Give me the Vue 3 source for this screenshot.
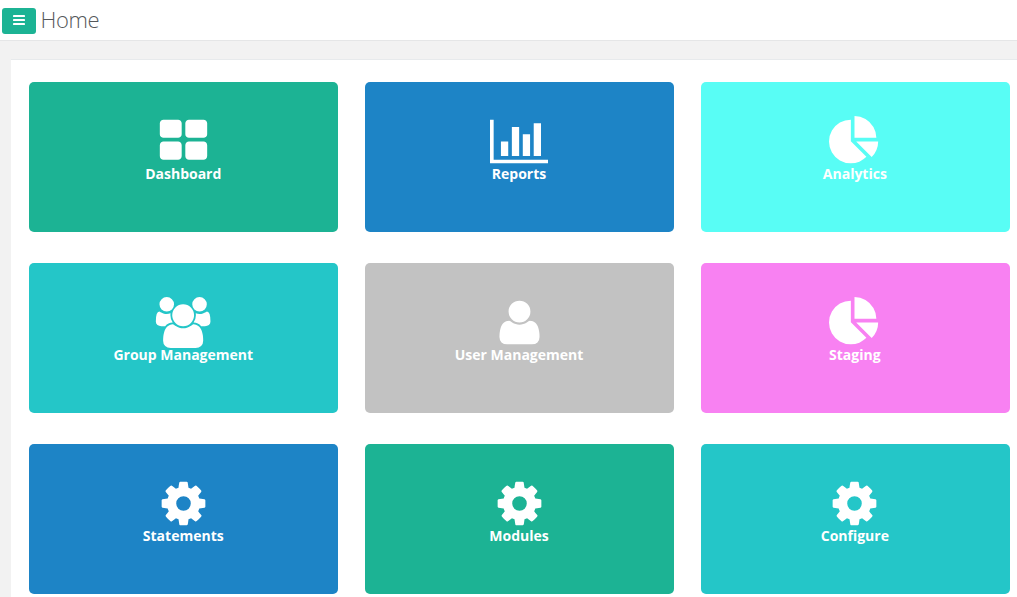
<script setup>
const icons = {
  grid: {
    box: '0 0 1792 1792',
    wide: false,
    d: 'M832 1024v384q0 52-38 90t-90 38h-512q-52 0-90-38t-38-90v-384q0-52 38-90t90-38h512q52 0 90 38t38 90zm0-768v384q0 52-38 90t-90 38h-512q-52 0-90-38t-38-90v-384q0-52 38-90t90-38h512q52 0 90 38t38 90zm896 768v384q0 52-38 90t-90 38h-512q-52 0-90-38t-38-90v-384q0-52 38-90t90-38h512q52 0 90 38t38 90zm0-768v384q0 52-38 90t-90 38h-512q-52 0-90-38t-38-90v-384q0-52 38-90t90-38h512q52 0 90 38t38 90z',
  },
  chart: {
    box: '0 0 2048 1792',
    wide: true,
    d: 'M640 896v512h-256v-512h256zm384-512v1024h-256v-1024h256zm1024 1152v128h-2048v-1536h128v1408h1920zm-640-896v768h-256v-768h256zm384-384v1152h-256v-1152h256z',
  },
  pie: {
    box: '0 0 1792 1792',
    wide: false,
    d: 'M768 890l546 546q-106 108-247.5 168t-298.5 60q-209 0-385.5-103t-279.5-279.5-103-385.5 103-385.5 279.5-279.5 385.5-103v762zm187 6h773q0 157-60 298.5t-168 247.5zm709-128h-768v-768q209 0 385.5 103t279.5 279.5 103 385.5z',
  },
  users: {
    box: '0 0 2048 1792',
    wide: true,
    d: 'M657 896q-162 5-265 128h-134q-82 0-138-40.5t-56-118.5q0-353 124-353 6 0 43.5 21t97.5 42.5 119 21.5q67 0 133-23-5 37-5 66 0 139 81 256zm1071 637q0 120-73 189.5t-194 69.5h-874q-121 0-194-69.5t-73-189.5q0-53 3.5-103.5t14-109 26.5-108.5 43-97.5 62-81 85.5-53.5 111.5-20q10 0 43 21.5t73 48 107 48 135 21.5 135-21.5 107-48 73-48 43-21.5q61 0 111.5 20t85.5 53.5 62 81 43 97.5 26.5 108.5 14 109 3.5 103.5zm-1024-1277q0 106-75 181t-181 75-181-75-75-181 75-181 181-75 181 75 75 181zm704 384q0 159-112.5 271.5t-271.5 112.5-271.5-112.5-112.5-271.5 112.5-271.5 271.5-112.5 271.5 112.5 112.5 271.5zm576 225q0 78-56 118.5t-138 40.5h-134q-103-123-265-128 81-117 81-256 0-29-5-66 66 23 133 23 59 0 119-21.5t97.5-42.5 43.5-21q124 0 124 353zm-128-609q0 106-75 181t-181 75-181-75-75-181 75-181 181-75 181 75 75 181z',
  },
  user: {
    box: '0 0 1792 1792',
    wide: false,
    d: 'M1600 1405q0 120-73 189.5t-194 69.5h-874q-121 0-194-69.5t-73-189.5q0-53 3.5-103.5t14-109 26.5-108.5 43-97.5 62-81 85.5-53.5 111.5-20q9 0 42 21.5t74.5 48 108 48 133.5 21.5 133.5-21.5 108-48 74.5-48 42-21.5q61 0 111.5 20t85.5 53.5 62 81 43 97.5 26.5 108.5 14 109 3.5 103.5zm-320-893q0 159-112.5 271.5t-271.5 112.5-271.5-112.5-112.5-271.5 112.5-271.5 271.5-112.5 271.5 112.5 112.5 271.5z',
  },
  cog: {
    box: '0 0 1792 1792',
    wide: false,
    d: 'M1152 896q0-106-75-181t-181-75-181 75-75 181 75 181 181 75 181-75 75-181zm512-109v222q0 12-8 23t-20 13l-185 28q-19 54-39 91 35 50 107 138 10 12 10 25t-9 23q-27 37-99 108t-94 71q-12 0-26-9l-138-108q-44 23-91 38-16 136-29 186-7 28-36 28h-222q-14 0-24.5-8.5t-11.5-21.5l-28-184q-49-16-90-37l-141 107q-10 9-25 9-14 0-25-11-126-114-165-168-7-10-7-23 0-12 8-23 15-21 51-66.5t54-70.5q-27-50-41-99l-183-27q-13-2-21-12.5t-8-23.5v-222q0-12 8-23t19-13l186-28q14-46 39-92-40-57-107-138-10-12-10-24 0-10 9-23 26-36 98.5-107.5t94.5-71.5q13 0 26 10l138 107q44-23 91-38 16-136 29-186 7-28 36-28h222q14 0 24.5 8.5t11.5 21.5l28 184q49 16 90 37l142-107q9-9 24-9 13 0 25 10 129 119 165 170 7 8 7 22 0 12-8 23-15 21-51 66.5t-54 70.5q26 50 41 98l183 28q13 2 21 12.5t8 23.5z',
  },
}

const tiles = [
  { label: 'Dashboard', icon: icons.grid, tone: 'green' },
  { label: 'Reports', icon: icons.chart, tone: 'blue' },
  { label: 'Analytics', icon: icons.pie, tone: 'aqua' },
  { label: 'Group Management', icon: icons.users, tone: 'teal' },
  { label: 'User Management', icon: icons.user, tone: 'gray' },
  { label: 'Staging', icon: icons.pie, tone: 'pink' },
  { label: 'Statements', icon: icons.cog, tone: 'blue' },
  { label: 'Modules', icon: icons.cog, tone: 'green' },
  { label: 'Configure', icon: icons.cog, tone: 'teal' },
]
</script>

<template>
  <div class="page">
    <header class="topbar">
      <button class="menu" type="button" aria-label="Menu">
        <svg viewBox="0 0 12 12" width="12" height="12">
          <rect width="12" height="2" rx="0.4" />
          <rect y="4" width="12" height="2" rx="0.4" />
          <rect y="8" width="12" height="2" rx="0.4" />
        </svg>
      </button>
      <h1 class="title">Home</h1>
    </header>
    <main class="panel">
      <a v-for="tile in tiles" :key="tile.label" class="tile" :class="tile.tone">
        <svg class="icon" :class="{ wide: tile.icon.wide }" :viewBox="tile.icon.box">
          <path :d="tile.icon.d" />
        </svg>
        <span class="label">{{ tile.label }}</span>
      </a>
    </main>
  </div>
</template>

<style>
body {
  margin: 0;
  overflow: hidden;
}
</style>

<style scoped>
.page {
  box-sizing: border-box;
  width: 100%;
  height: 597px;
  overflow: hidden;
  display: flex;
  flex-direction: column;
  background: #f2f2f2;
  font-family: "Open Sans", "Liberation Sans", sans-serif;
}
.topbar {
  box-sizing: border-box;
  flex: none;
  height: 41px;
  padding: 8px 0 0 2px;
  display: flex;
  align-items: flex-start;
  gap: 5px;
  background: #fff;
  border-bottom: 1px solid #e5e6e7;
}
.menu {
  width: 34px;
  height: 26px;
  padding: 0;
  border: 0;
  border-radius: 3px;
  background: #1cb394;
  display: flex;
  align-items: center;
  justify-content: center;
}
svg {
  display: block;
  fill: #fff;
}
.title {
  margin: -4px 0 0 -0.5px;
  font-size: 22px;
  line-height: 30px;
  letter-spacing: -0.4px;
  font-weight: 300;
  color: #55585b;
}
.panel {
  box-sizing: border-box;
  flex: none;
  height: 560px;
  margin: 18px 0 0 11px;
  padding: 22px 7px 0 18px;
  display: grid;
  grid-template-columns: repeat(3, 309px);
  grid-auto-rows: 150px;
  gap: 31px 26.8px;
  align-content: start;
  background: #fff;
  border-top: 1px solid #e7eaec;
}
.tile {
  box-sizing: border-box;
  padding: 33.7px 0.5px 0 0;
  border-radius: 5px;
  display: flex;
  flex-direction: column;
  align-items: center;
  color: #fff;
}
.icon {
  width: 51px;
  height: 51px;
}
.icon.wide {
  width: 58.3px;
}
.label {
  margin-top: -2.7px;
  font-size: 14px;
  line-height: 20px;
  font-weight: 700;
}
.green { background: #1cb394; }
.blue { background: #1d84c6; }
.aqua { background: #58fdf5; }
.teal { background: #24c6c8; }
.gray { background: #c2c2c2; }
.pink { background: #f881f2; }
</style>
